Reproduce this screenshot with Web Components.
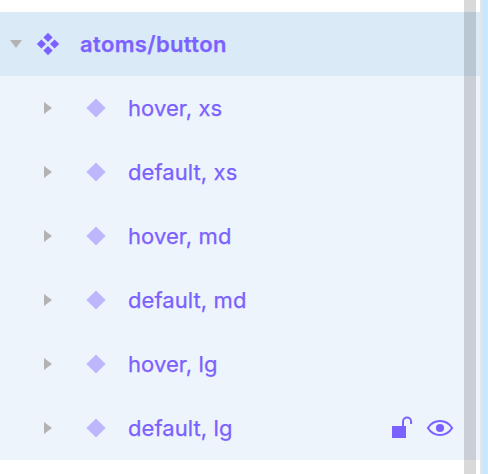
<!DOCTYPE html>
<html lang="en">
<head>
<meta charset="utf-8">
<title>Layers</title>
<style>
html, body { margin: 0; height: 100%; overflow: hidden; background: #fff; }
</style>
</head>
<body>
<layers-panel>
  <layer-row kind="set">atoms/button</layer-row>
  <layer-row>hover, xs</layer-row>
  <layer-row>default, xs</layer-row>
  <layer-row>hover, md</layer-row>
  <layer-row>default, md</layer-row>
  <layer-row>hover, lg</layer-row>
  <layer-row actions>default, lg</layer-row>
</layers-panel>
<script>
const define = (name, html) => customElements.define(name, class extends HTMLElement {
  constructor() {
    super();
    this.attachShadow({ mode: 'open' }).innerHTML = html;
  }
});

define('layers-panel', `
<style>
:host { display: flex; height: 474px; width: 488px; font-family: Inter, "Liberation Sans", sans-serif; color: #7b61ff; }
.list { position: relative; box-sizing: border-box; width: 480px; padding-top: 12px; display: flex; flex-direction: column; }
.thumb { position: absolute; top: 0; bottom: 0; right: 4px; width: 12px; background: rgba(0,0,0,.15); }
.canvas { box-sizing: border-box; width: 8px; border-left: 2px solid #e5e5e5; background: #cbe7fc; }
</style>
<div class="list"><slot></slot><div class="thumb"></div></div>
<div class="canvas"></div>`);

define('layer-row', `
<style>
:host { display: flex; box-sizing: border-box; height: 64px; align-items: center; padding: 0 26px 0 40px; background: #edf4fb; font-size: 22px; line-height: 32px; letter-spacing: .08px; -webkit-text-stroke: .25px #7b61ff; white-space: nowrap; }
:host([kind="set"]) { background: #daeaf7; font-weight: 600; padding-left: 8px; letter-spacing: .35px; }
svg { display: block; flex: none; }
.arrow { margin-right: 28px; }
.icon { margin-right: 20px; }
:host([kind="set"]) .arrow { margin-right: 12px; }
.open, .set, .actions { display: none; }
:host([kind="set"]) .open, :host([kind="set"]) .set { display: block; }
:host([kind="set"]) .closed, :host([kind="set"]) .variant { display: none; }
.name { flex: 1; }
:host([actions]) .actions { display: flex; gap: 12px; }
</style>
<svg class="arrow closed" width="16" height="16"><path d="M4 2v12l8-6z" fill="#b3b3b3"/></svg>
<svg class="arrow open" width="16" height="16"><path d="M2 4h12l-6 8z" fill="#b3b3b3"/></svg>
<svg class="icon variant" width="24" height="24"><path d="M12 2.400 21.600 12 12 21.600 2.400 12z" fill="#bdb6fd"/></svg>
<svg class="icon set" width="24" height="24"><path d="M12 .8l4.600 4.600L12 10 7.400 5.400zM12 14l4.600 4.600L12 23.200l-4.600-4.600zM5.400 7.400 10 12l-4.600 4.600L.8 12zM18.600 7.400 23.200 12l-4.600 4.600L14 12z" fill="#7b61ff"/></svg>
<span class="name"><slot></slot></span>
<span class="actions">
<svg width="24" height="24" viewBox="390 416 24 24"><path d="M392 426h14v12h-14z" fill="#7b61ff"/><path d="M403 427v-5.500a4.050 4.050 0 0 1 8.100 0V424" fill="none" stroke="#7b61ff" stroke-width="2"/></svg>
<svg width="28" height="24" viewBox="426 416 28 24"><path d="M427.900 428c2.700-4.300 7.200-7 12.100-7s9.400 2.700 12.100 7c-2.700 4.300-7.200 7-12.100 7s-9.400-2.700-12.100-7z" fill="none" stroke="#7b61ff" stroke-width="2"/><circle cx="440" cy="428" r="4.100" fill="#7b61ff"/></svg>
</span>`);
</script>
</body>
</html>
